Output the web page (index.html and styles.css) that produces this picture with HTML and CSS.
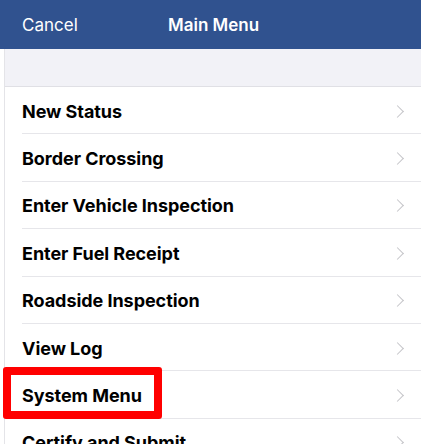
FILE: index.html
```html
<!DOCTYPE html>
<html>
<head>
<meta charset="utf-8">
<link rel="stylesheet" href="styles.css">
</head>
<body>
<header class="navbar">
  <span class="nav-cancel">Cancel</span>
  <span class="nav-title">Main Menu</span>
</header>
<main class="content">
  <div class="spacer"></div>
  <ul class="menu">
    <li class="row"><span class="label">New Status</span><span class="chev"></span></li>
    <li class="row"><span class="label">Border Crossing</span><span class="chev"></span></li>
    <li class="row"><span class="label">Enter Vehicle Inspection</span><span class="chev"></span></li>
    <li class="row"><span class="label">Enter Fuel Receipt</span><span class="chev"></span></li>
    <li class="row"><span class="label">Roadside Inspection</span><span class="chev"></span></li>
    <li class="row"><span class="label">View Log</span><span class="chev"></span></li>
    <li class="row highlighted"><span class="label">System Menu</span><span class="chev"></span><span class="highlight-box"></span></li>
    <li class="row"><span class="label">Certify and Submit</span><span class="chev"></span></li>
  </ul>
</main>
</body>
</html>
```
FILE: styles.css
```css
html, body {
  margin: 0;
  padding: 0;
  background: #ffffff;
  font-family: Inter, "Noto Sans", sans-serif;
  height: 444px;
  overflow: hidden;
}
.navbar {
  height: 49px;
  background: #30528f;
  color: #ffffff;
  display: flex;
  align-items: center;
  padding-left: 22px;
  font-size: 17px;
  box-sizing: border-box;
}
.nav-cancel {
  width: 146px;
  font-weight: 400;
}
.nav-title {
  font-weight: 600;
}
.content {
  margin-left: 4px;
  border-left: 1px solid #e4e4e8;
  min-height: 400px;
}
.spacer {
  height: 37px;
  background: #f2f2f7;
  border-bottom: 1px solid #e0e0e5;
}
.menu {
  list-style: none;
  margin: 0;
  padding: 0 0 0 17px;
}
.row {
  position: relative;
  height: 46.4px;
  border-bottom: 1px solid #e6e6ea;
  display: flex;
  align-items: center;
  justify-content: space-between;
  padding-right: 18px;
  box-sizing: content-box;
}
.label {
  font-size: 18px;
  font-weight: 700;
  color: #000000;
  letter-spacing: -0.05px;
  padding-top: 2px;
}
.chev {
  width: 8px;
  height: 8px;
  border-right: 1.5px solid #c4c4c8;
  border-top: 1.5px solid #c4c4c8;
  transform: rotate(45deg);
  margin-right: 1px;
  margin-top: 2px;
}
.highlight-box {
  position: absolute;
  left: -19px;
  top: -4px;
  width: 143px;
  height: 36px;
  border: 8px solid #ff0000;
  border-radius: 3px;
}
```
